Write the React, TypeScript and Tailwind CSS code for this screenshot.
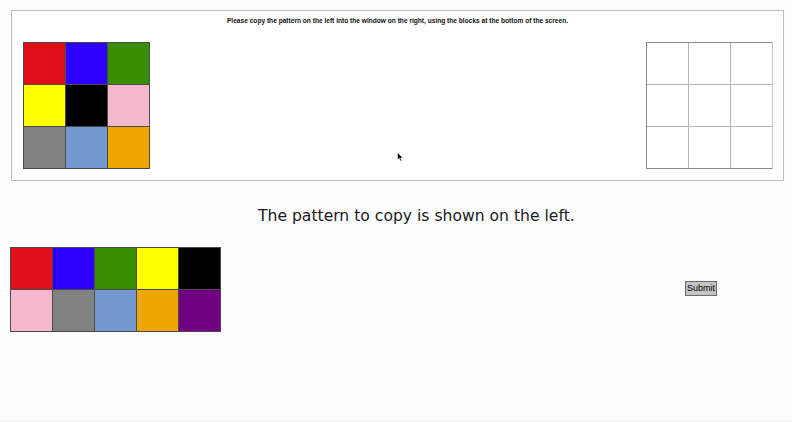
import React from "react";

const pattern = ["#e00f1a", "#2b00ff", "#378f00", "#ffff00", "#000000", "#f5b8cd", "#818181", "#7698d1", "#eea600"];
const palette = ["#e00f1a", "#2b00ff", "#378f00", "#ffff00", "#000000", "#f5b8cd", "#818181", "#7698d1", "#eea600", "#720082"];

export default function App() {
  return (
    <div className="relative w-[792px] h-[422px] overflow-hidden bg-[#fdfdfe]" style={{ fontFamily: "'Liberation Sans', Arial, sans-serif" }}>
      <div className="ml-[11px] mt-[10px] w-[773px] h-[171px] border border-[#bdbdbd] bg-white">
        <p className="text-center text-[6.6px] leading-[9px] font-bold text-[#111] pt-[5px]">
          Please copy the pattern on the left into the window on the right, using the blocks at the bottom of the screen.
        </p>
        <div className="flex justify-between pl-[11px] pr-[10px] mt-[17px]">
          <div className="grid grid-cols-[repeat(3,41px)] gap-px bg-[#4a4a4a] border border-[#4a4a4a]">
            {pattern.map((c, i) => (
              <div key={i} className="h-[41px]" style={{ backgroundColor: c }} />
            ))}
          </div>
          <div className="grid grid-cols-[repeat(3,41px)] gap-px bg-[#b5b5b5] border border-[#8a8a8a] border-r-[#c8c8c8]">
            {Array.from({ length: 9 }).map((_, i) => (
              <div key={i} className="h-[41px] bg-white" />
            ))}
          </div>
        </div>
      </div>
      <div className="pl-[258px] mt-[25px] text-[15.6px] leading-[20px] text-[#1a1a1a]" style={{ fontFamily: "'DejaVu Sans', Verdana, sans-serif" }}>
        The pattern to copy is shown on the left.
      </div>
      <div className="flex items-start ml-[10px] mt-[21px]">
        <div className="grid grid-cols-[repeat(5,41px)] gap-px bg-[#4a4a4a] border border-[#4a4a4a]">
          {palette.map((c, i) => (
            <div key={i} className="h-[41px]" style={{ backgroundColor: c }} />
          ))}
        </div>
        <button className="ml-[464px] mt-[34px] w-[32px] h-[15px] bg-[#c4c4c4] border border-[#6a6a6a] text-[9px] leading-[13px] text-black text-center p-0">
          Submit
        </button>
      </div>
      <svg className="absolute left-[397px] top-[152px]" width="7" height="10" viewBox="0 0 7 10">
        <path d="M0.5 0.5 L0.5 8 L2.3 6.3 L3.6 9.2 L4.8 8.7 L3.6 5.9 L6 5.9 Z" fill="#000" stroke="#fff" strokeWidth="0.6" />
      </svg>
      <div className="absolute left-0 right-0 bottom-[1px] h-px bg-[#f3f3f3]" />
    </div>
  );
}
